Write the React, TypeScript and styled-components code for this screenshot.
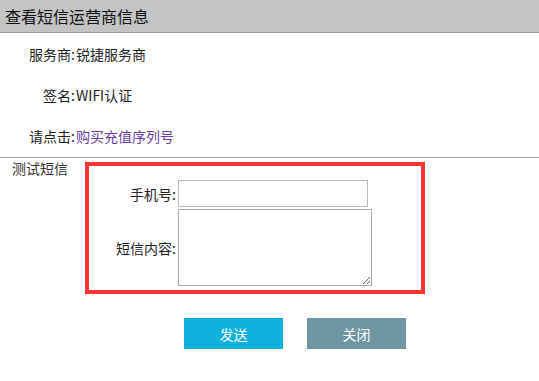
import styled, { createGlobalStyle } from 'styled-components'

const GlobalStyle = createGlobalStyle`
  body {
    margin: 0;
    background: #fff;
    font-family: "Noto Sans CJK SC", "Microsoft YaHei", sans-serif;
    font-size: 14px;
    color: #222;
  }
`

const Header = styled.div`
  height: 32px;
  line-height: 32px;
  background: #c4c4c4;
  border-bottom: 1px solid #999;
  padding-left: 5px;
  font-size: 16px;
  color: #111;
`

const InfoList = styled.div`
  padding-bottom: 1px;
  border-bottom: 1px solid #a0a0a0;
`

const InfoRow = styled.div`
  display: flex;
  align-items: center;
  height: 41px;
`

const InfoLabel = styled.span`
  width: 75px;
  text-align: right;
`

const InfoValue = styled.span`
  margin-left: 1px;
`

const BuyLink = styled.a`
  margin-left: 1px;
  color: #6b3fa8;
  text-decoration: none;
  cursor: pointer;
`

const TestSection = styled.div`
  display: flex;
`

const SectionTitle = styled.div`
  width: 73px;
  padding-left: 12px;
  line-height: 20px;
  color: #333;
`

const TestBox = styled.div`
  margin-top: 4px;
  width: 332px;
  padding: 14px 0 4px;
  border: 4px solid #f33;
`

const FormRow = styled.div`
  display: flex;
  align-items: center;
  & + & {
    margin-top: 2px;
  }
`

const FormLabel = styled.label`
  width: 87px;
  text-align: right;
  margin-right: 2px;
`

const PhoneInput = styled.input`
  box-sizing: border-box;
  width: 190px;
  height: 27px;
  border: 1px solid #b8b8b8;
  outline: none;
  padding: 0 4px;
`

const MessageArea = styled.textarea`
  box-sizing: border-box;
  width: 194px;
  height: 77px;
  border: 1px solid #aaa;
  outline: none;
  padding: 2px 4px;
  font-family: inherit;
`

const Actions = styled.div`
  display: flex;
  gap: 24px;
  padding: 24px 0 0 184px;
`

const ActionButton = styled.button<{ $tone: 'primary' | 'muted' }>`
  width: 99px;
  height: 31px;
  border: none;
  color: #fff;
  font-family: inherit;
  font-size: 14px;
  cursor: pointer;
  background: ${p => (p.$tone === 'primary' ? '#0fb0dc' : '#6f95a2')};
`

function App() {
  return (
    <>
      <GlobalStyle />
      <Header>查看短信运营商信息</Header>
      <InfoList>
        <InfoRow>
          <InfoLabel>服务商:</InfoLabel>
          <InfoValue>锐捷服务商</InfoValue>
        </InfoRow>
        <InfoRow>
          <InfoLabel>签名:</InfoLabel>
          <InfoValue>WIFI认证</InfoValue>
        </InfoRow>
        <InfoRow>
          <InfoLabel>请点击:</InfoLabel>
          <BuyLink>购买充值序列号</BuyLink>
        </InfoRow>
      </InfoList>
      <TestSection>
        <SectionTitle>测试短信</SectionTitle>
        <TestBox>
          <FormRow>
            <FormLabel>手机号:</FormLabel>
            <PhoneInput type="text" />
          </FormRow>
          <FormRow>
            <FormLabel>短信内容:</FormLabel>
            <MessageArea />
          </FormRow>
        </TestBox>
      </TestSection>
      <Actions>
        <ActionButton $tone="primary">发送</ActionButton>
        <ActionButton $tone="muted">关闭</ActionButton>
      </Actions>
    </>
  )
}

export default App
